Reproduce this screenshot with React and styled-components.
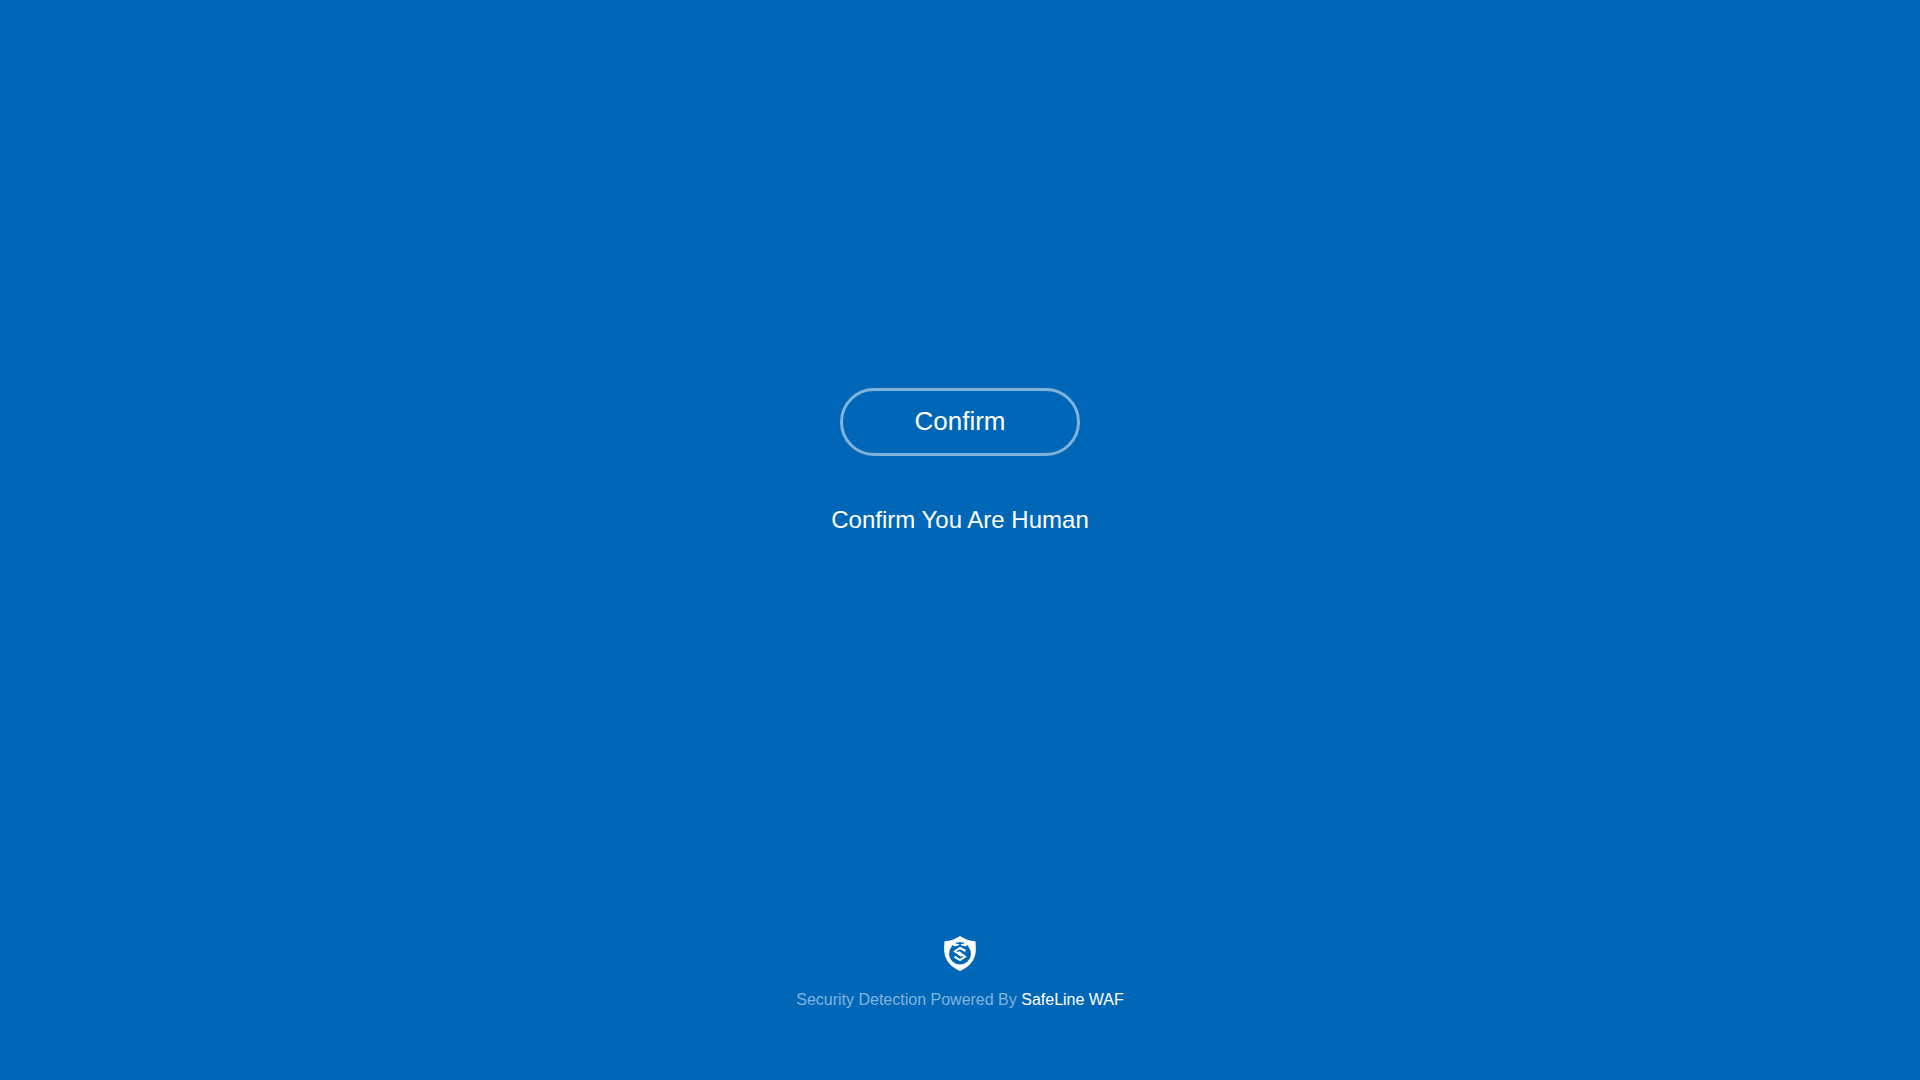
import React from 'react';
import styled, { createGlobalStyle } from 'styled-components';

const color = {
    $page: '#0067b8',
    $text: '#ffffff',
    $faded: 'rgba(255, 255, 255, 0.5)',
}

const GlobalStyle = createGlobalStyle`
    body {
        margin: 0;
        background-color: ${color.$page};
        color: ${color.$text};
        font-family: "Liberation Sans", Arial, sans-serif;
    }
`

const Page = styled.div`
    display: flex;
    flex-direction: column;
    justify-content: space-between;
    align-items: center;
    box-sizing: border-box;
    min-height: 100vh;
    padding: 35.9vh 24px 71px;
    text-align: center;
`

const Challenge = styled.main`
    display: flex;
    flex-direction: column;
    align-items: center;
    gap: 50px;
`

const ConfirmButton = styled.button`
    box-sizing: border-box;
    min-width: 240px;
    padding: 15px 24px 17px;
    border: 3px solid ${color.$faded};
    border-radius: 34px;
    background: transparent;
    color: inherit;
    font-family: inherit;
    font-size: 26px;
    line-height: 30px;
    cursor: pointer;

    &:hover {
        border-color: ${color.$text};
    }
`

const Hint = styled.p`
    margin: 0;
    font-size: 24px;
    line-height: 28px;
`

const Footer = styled.footer`
    display: flex;
    flex-direction: column;
    align-items: center;
    gap: 20px;
    color: ${color.$faded};
    font-size: 16px;
    line-height: 18px;
`

const Brand = styled.a`
    color: ${color.$text};
    text-decoration: none;
`

const ShieldLogo = () => (
    <svg width="32" height="35" viewBox="0 0 32 35" aria-hidden="true">
        <path
            fill={color.$text}
            d="M16 0C11.5 3.2 6.5 4.8 0.6 5.2C0.2 9 0 12.5 0.3 16C1.2 25 7.5 31.5 16 35C24.500 31.5 30.8 25 31.7 16C32 12.5 31.8 9 31.4 5.2C25.5 4.8 20.5 3.2 16 0Z"
        />
        <path
            fill={color.$page}
            d="M8.2 9L10.3 10.2C12 10.4 14 9.9 14.9 9.1L15.4 8H12.9L11.4 6.6H14.9L16 5.5L17.1 6.6H20.6L19.1 8H16.6L17.1 9.1C18 9.9 20 10.4 21.7 10.2L23.8 9L24.3 10.4A11 11 0 1 1 7.7 10.4Z"
        />
        {/* two interlocked hooks that form the S */}
        <path
            fill="none"
            stroke={color.$text}
            strokeWidth="2"
            d="M21.5 15L16 12L11 15.2L17.5 20M10.5 20.6L16 24L21 20.6L14.500 15.8"
        />
    </svg>
)

const App = () => (
    <>
        <GlobalStyle />
        <Page>
            <Challenge>
                <ConfirmButton type="button">Confirm</ConfirmButton>
                <Hint>Confirm You Are Human</Hint>
            </Challenge>
            <Footer>
                <ShieldLogo />
                <span>Security Detection Powered By <Brand href="#safeline">SafeLine WAF</Brand></span>
            </Footer>
        </Page>
    </>
)

export default App;
